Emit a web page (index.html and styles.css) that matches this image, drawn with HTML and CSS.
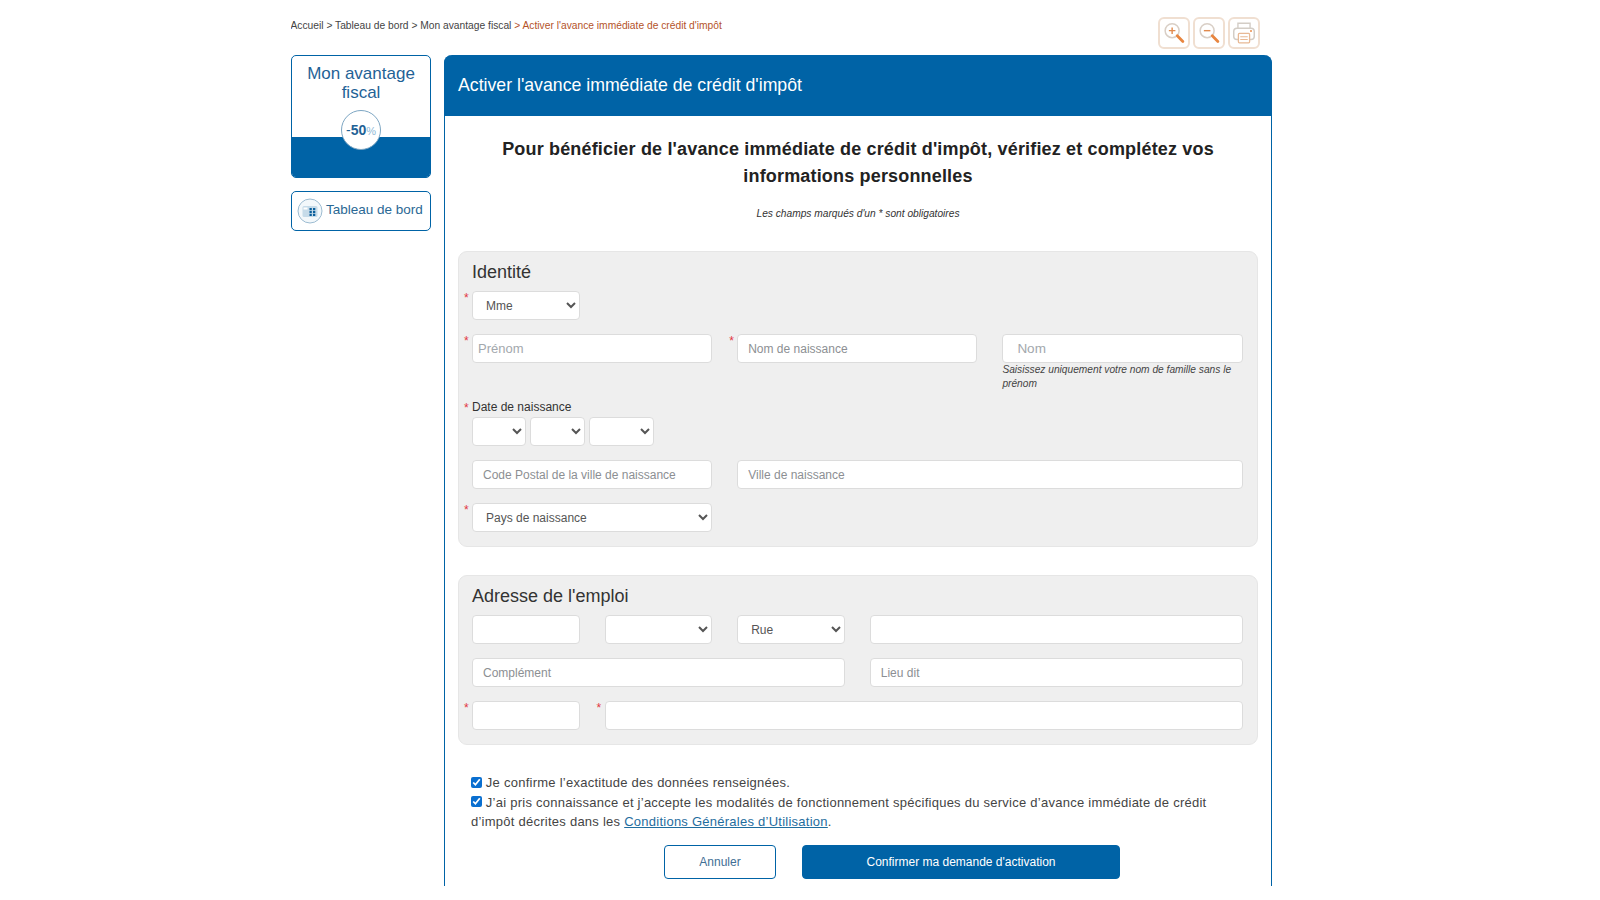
FILE: index.html
```html
<!DOCTYPE html>
<html lang="fr">
<head>
<meta charset="utf-8">
<title>Activer l'avance immédiate de crédit d'impôt</title>
<link rel="stylesheet" href="styles.css">
</head>
<body>
<div class="page">
  <div class="topbar">
    <nav class="crumbs">Accueil &gt; Tableau de bord &gt; Mon avantage fiscal <span class="crumb-current">&gt; Activer l'avance immédiate de crédit d'impôt</span></nav>
    <div class="tools">
      <button class="tool" type="button" aria-label="Zoom avant"><svg viewBox="0 0 30 30" width="30" height="30"><circle cx="13" cy="12.5" r="7.5" fill="none" stroke="#d9cfc6" stroke-width="1.6"/><path d="M9.5 12.5h7M13 9v7" stroke="#e08a4e" stroke-width="1.5"/><path d="M18.5 18l6 6" stroke="#e8853f" stroke-width="3" stroke-linecap="round"/></svg></button>
      <button class="tool" type="button" aria-label="Zoom arrière"><svg viewBox="0 0 30 30" width="30" height="30"><circle cx="13" cy="12.5" r="7.5" fill="none" stroke="#d9cfc6" stroke-width="1.6"/><path d="M9.5 12.5h7" stroke="#e08a4e" stroke-width="1.5"/><path d="M18.5 18l6 6" stroke="#e8853f" stroke-width="3" stroke-linecap="round"/></svg></button>
      <button class="tool" type="button" aria-label="Imprimer"><svg viewBox="0 0 30 30" width="30" height="30"><path d="M8.500 10V4.500h13V10" fill="none" stroke="#d3cdc6" stroke-width="1.5"/><rect x="4" y="10" width="22" height="12" rx="3.500" fill="none" stroke="#d3cdc6" stroke-width="1.600"/><rect x="9" y="15.500" width="12" height="10" rx="1" fill="#fff" stroke="#e8b995" stroke-width="1.400"/><path d="M11 19h8M11 22h8" stroke="#e8b995" stroke-width="1.200"/><circle cx="22.500" cy="12.800" r="1" fill="#e8853f"/></svg></button>
    </div>
  </div>

  <div class="columns">
    <aside class="side">
      <div class="promo">
        <div class="promo-title">Mon avantage fiscal</div>
        <div class="promo-band"><div class="badge"><span class="badge-minus">-</span>50<span class="badge-pct">%</span></div></div>
      </div>
      <a class="dash" href="#">
        <svg class="dash-icon" viewBox="0 0 26 26" width="26" height="26"><circle cx="13" cy="13" r="12" fill="#f3f8fb" stroke="#9dbcd2"/><rect x="5.500" y="8" width="15" height="11" rx="1.500" fill="#c6dbe9"/><rect x="6.500" y="9.500" width="4" height="2" fill="#fff"/><path d="M12.500 10h2.300v2.300h-2.300zM16 10h2.300v2.300H16zM12.500 13h2.300v2.300h-2.300zM16 13h2.300v2.300H16zM12.500 16h2.300v2h-2.300zM16 16h2.300v2H16z" fill="#0a5f9c"/></svg>
        <span>Tableau de bord</span>
      </a>
    </aside>

    <main class="panel">
      <h1 class="panel-title">Activer l'avance immédiate de crédit d'impôt</h1>
      <div class="panel-body">
        <h2 class="lead">Pour bénéficier de l'avance immédiate de crédit d'impôt, vérifiez et complétez vos informations personnelles</h2>
        <p class="mandatory">Les champs marqués d'un * sont obligatoires</p>

        <form>
          <section class="box box-identity">
            <h3 class="box-title">Identité</h3>
            <div class="grid">
              <div class="field req"><select class="ctl sel"><option>Mme</option></select></div>
            </div>
            <div class="grid grid-names">
              <div class="field req s2"><input class="ctl ph-a" placeholder="Prénom"></div>
              <div class="field req s2"><input class="ctl ph-b" placeholder="Nom de naissance"></div>
              <div class="field s2">
                <input class="ctl ph-c" placeholder="Nom">
                <p class="hint">Saisissez uniquement votre nom de famille sans le prénom</p>
              </div>
            </div>
            <div class="date-block">
              <div class="date-label req">Date de naissance</div>
              <div class="date-row">
                <select class="ctl sel d1"></select>
                <select class="ctl sel d2"></select>
                <select class="ctl sel d3"></select>
              </div>
            </div>
            <div class="grid grid-gap">
              <div class="field s2"><input class="ctl ph-b" placeholder="Code Postal de la ville de naissance"></div>
              <div class="field s4"><input class="ctl ph-b" placeholder="Ville de naissance"></div>
            </div>
            <div class="grid grid-gap">
              <div class="field req s2"><select class="ctl sel"><option>Pays de naissance</option></select></div>
            </div>
          </section>

          <section class="box box-address">
            <h3 class="box-title">Adresse de l'emploi</h3>
            <div class="grid">
              <div class="field"><input class="ctl"></div>
              <div class="field"><select class="ctl sel"></select></div>
              <div class="field"><select class="ctl sel"><option>Rue</option></select></div>
              <div class="field s3"><input class="ctl"></div>
            </div>
            <div class="grid grid-gap">
              <div class="field s3"><input class="ctl ph-b" placeholder="Complément"></div>
              <div class="field s3"><input class="ctl ph-b" placeholder="Lieu dit"></div>
            </div>
            <div class="grid grid-gap">
              <div class="field req"><input class="ctl"></div>
              <div class="field req s5"><input class="ctl"></div>
            </div>
          </section>

          <div class="consents">
            <label class="consent"><input type="checkbox" checked> Je confirme l’exactitude des données renseignées.</label>
            <label class="consent"><input type="checkbox" checked> J’ai pris connaissance et j’accepte les modalités de fonctionnement spécifiques du service d’avance immédiate de crédit d’impôt décrites dans les <a href="#">Conditions Générales d’Utilisation</a>.</label>
          </div>

          <div class="actions">
            <button class="btn btn-ghost" type="button">Annuler</button>
            <button class="btn btn-solid" type="button">Confirmer ma demande d'activation</button>
          </div>
        </form>
      </div>
    </main>
  </div>
</div>
</body>
</html>
```

FILE: styles.css
```css
* { box-sizing: border-box; }
html, body { margin: 0; background: #fff; }
body { font-family: "Liberation Sans", Arial, sans-serif; color: #333; }

.page { width: 982px; height: 886px; margin-left: 291px; overflow: hidden; }

.topbar { height: 55px; display: flex; justify-content: space-between; }
.crumbs { font-size: 10.250px; color: #444; padding-top: 20px; margin-left: -0.500px; }
.crumb-current { color: #b4532a; }
.tools { display: flex; gap: 3px; padding: 17px 13px 0 0; }
.tool { width: 32px; height: 32px; padding: 0; background: #fff; border: 2px solid #f0dfd1; border-radius: 6px; display: flex; align-items: center; justify-content: center; }

.columns { display: flex; gap: 13px; align-items: flex-start; }
.side { width: 140px; flex: none; display: flex; flex-direction: column; gap: 13px; }

.promo { height: 123px; border: 1px solid #0063a6; border-radius: 5px; overflow: hidden; display: flex; flex-direction: column; }
.promo-title { height: 81px; padding: 8px 10px 0; text-align: center; font-size: 17px; line-height: 19px; color: #1f6296; }
.promo-band { flex: 1; background: #0063a6; position: relative; }
.badge { position: absolute; left: 49px; top: -27px; width: 40px; height: 40px; border-radius: 50%; background: #fff; border: 1px solid #7da6c3; text-align: center; font-size: 14px; font-weight: bold; line-height: 38px; color: #1f6296; white-space: nowrap; }
.badge-minus { font-weight: normal; }
.badge-pct { font-size: 11px; font-weight: normal; color: #8fb9d6; }

.dash { height: 40px; border: 1px solid #0063a6; border-radius: 5px; display: flex; align-items: center; gap: 3px; padding: 0 5px; color: #2a6894; font-size: 13.500px; text-decoration: none; }
.dash span { padding-bottom: 3px; white-space: nowrap; }
.dash-icon { flex: none; }

.panel { width: 828px; flex: none; min-height: 840px; border: 1px solid #0063a6; border-top: 0; border-bottom: 0; border-radius: 8px 8px 0 0; }
.panel-title { margin: 0 -1px; height: 61px; padding: 0 14px; background: #0063a6; border-radius: 8px 8px 0 0; color: #fff; font-size: 17.700px; font-weight: normal; line-height: 60px; }
.panel-body { padding: 20px 13px 0; }

.lead { margin: 0 auto; width: 740px; text-align: center; font-size: 18px; line-height: 26.500px; font-weight: bold; letter-spacing: 0.170px; color: #222; }
.mandatory { margin: 18px 0 0; text-align: center; font-size: 10.200px; line-height: 14px; font-style: italic; color: #333; }

.box { background: #efefef; border: 1px solid #e6e6e6; border-radius: 9px; padding: 0 13px; }
.box-identity { height: 296px; margin-top: 30px; }
.box-address { height: 170px; margin-top: 28px; }
.box-title { margin: 0; font-size: 18px; font-weight: normal; line-height: 22px; color: #333; padding-top: 9px; height: 39px; }

.grid { display: grid; grid-template-columns: repeat(6, 107.600px); column-gap: 25px; }
.grid-names { margin-top: 14px; height: 63px; }
.grid-gap { margin-top: 14px; }
.s2 { grid-column: span 2; }
.s3 { grid-column: span 3; }
.s4 { grid-column: span 4; }
.s5 { grid-column: span 5; }

.field { position: relative; }
.req::before { content: "*"; position: absolute; left: -8px; top: 0; font-size: 12px; line-height: 14px; color: #e2363f; }

.ctl { display: block; width: 100%; height: 29px; background: #fff; border: 1px solid #dcdcdc; border-radius: 4px; font-family: "Liberation Sans", Arial, sans-serif; font-size: 12px; color: #555; padding: 0 10px; outline: 0; }
.sel { padding-left: 9px; }
.ctl::placeholder { color: #8c8f93; opacity: 1; }
.ph-a { padding-left: 5px; font-size: 13px; }
.ph-a::placeholder, .ph-c::placeholder { color: #a3a8ad; }
.ph-c { padding-left: 14px; font-size: 13.500px; }

.hint { margin: 0; font-size: 10.200px; line-height: 14px; font-style: italic; color: #444; }

.date-block { margin-top: 3px; }
.date-label { position: relative; font-size: 12px; line-height: 14px; color: #333; }
.date-label.req::before { top: 1px; }
.date-row { display: flex; gap: 4px; margin-top: 3px; }
.d1 { width: 54px; }
.d2 { width: 55px; }
.d3 { width: 65px; }

.consents { margin: 28px 13px 0; font-size: 13px; line-height: 19.500px; letter-spacing: 0.250px; color: #444; }
.consent { display: block; }
.consent input { width: 11px; height: 11px; margin: 0 0.500px 0 -0.500px; vertical-align: -0.500px; accent-color: #0a6fd0; }
.consent a { color: #1f6d9e; }

.actions { display: flex; gap: 26px; margin-top: 13px; padding-left: 206px; }
.btn { height: 34px; border-radius: 4px; font-family: "Liberation Sans", Arial, sans-serif; font-size: 12px; padding: 0; }
.btn-ghost { width: 112px; background: #fff; border: 1px solid #0063a6; color: #3f6f95; }
.btn-solid { width: 318px; background: #0063a6; border: 1px solid #0063a6; color: #fff; }
```
